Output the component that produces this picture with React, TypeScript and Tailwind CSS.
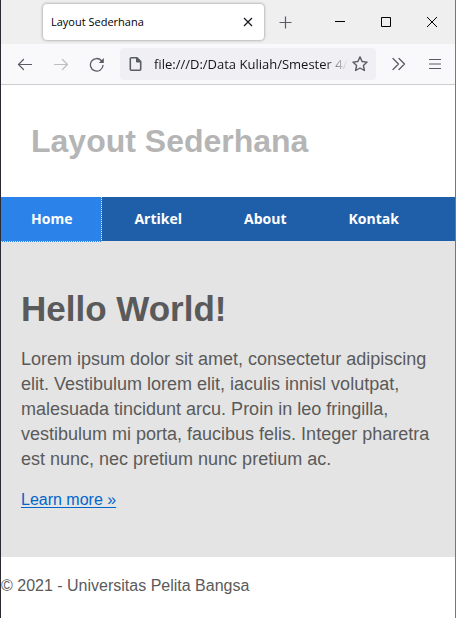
import React from "react";

const navItems = ["Home", "Artikel", "About", "Kontak"];

function TabBar() {
  return (
    <div className="flex h-11 items-center bg-[#efeff0] text-[#15141a]">
      <div className="ml-[42px] flex h-9 min-w-0 flex-1 items-center justify-between rounded bg-white pl-2 pr-2 shadow-[0_0_3px_rgba(0,0,0,0.45)]">
        <span className="truncate pt-px font-['Open_Sans',sans-serif] text-[11px] text-black">Layout Sederhana</span>
        <button aria-label="Close tab" className="flex size-4 items-center justify-center">
          <svg width="16" height="16" viewBox="0 0 16 16" fill="none" stroke="currentColor" strokeWidth="1.2">
            <path d="M4 4l8 8M12 4l-8 8" />
          </svg>
        </button>
      </div>
      <button aria-label="New tab" className="mr-[9px] flex w-11 justify-center text-[#5b5b66]">
        <svg width="16" height="16" viewBox="0 0 16 16" fill="none" stroke="currentColor" strokeWidth="1.2">
          <path d="M7.500 2.500v12M1.500 8.500h12" />
        </svg>
      </button>
      <div className="flex text-black">
        <button aria-label="Minimize" className="flex w-[46px] justify-center">
          <svg width="12" height="12" viewBox="0 0 12 12" fill="none" stroke="currentColor">
            <path d="M1 5.500h10" />
          </svg>
        </button>
        <button aria-label="Maximize" className="flex w-[46px] justify-center">
          <svg width="12" height="12" viewBox="0 0 12 12" fill="none" stroke="currentColor">
            <path d="M1.500 1.500h9v9h-9z" />
          </svg>
        </button>
        <button aria-label="Close window" className="flex w-[46px] justify-center">
          <svg width="12" height="12" viewBox="0 0 12 12" fill="none" stroke="currentColor">
            <path d="M1 1l10 10M11 1L1 11" />
          </svg>
        </button>
      </div>
    </div>
  );
}

function Toolbar() {
  return (
    <div className="flex h-[41px] items-center border-b border-[#cccccf] bg-[#f9f9fb] pl-[15px] pr-3 text-[#5b5b66]">
      <button aria-label="Back" className="w-9">
        <svg width="16" height="16" viewBox="0 0 16 16" fill="none" stroke="currentColor" strokeWidth="1.2" strokeLinecap="round" strokeLinejoin="round">
          <path d="M15.500 8.500H2.500M7.500 3.500L2.500 8.500L7.500 13.500" />
        </svg>
      </button>
      <button aria-label="Forward" disabled className="w-9 text-[#bdbdc2]">
        <svg width="16" height="16" viewBox="0 0 16 16" fill="none" stroke="currentColor" strokeWidth="1.2" strokeLinecap="round" strokeLinejoin="round">
          <path d="M2.500 8.500h13M10.500 3.500L15.500 8.500L10.500 13.500" />
        </svg>
      </button>
      <button aria-label="Reload" className="w-8">
        <svg width="16" height="16" viewBox="0 0 16 16" fill="none" stroke="currentColor" strokeWidth="1.3" strokeLinecap="round">
          <path d="M15 9.500A6.300 6.300 0 1 1 13.500 4.700" />
          <path d="M15.800 2v5h-5z" fill="currentColor" stroke="none" />
        </svg>
      </button>
      <div className="flex h-8 min-w-0 flex-1 items-center rounded bg-[#f0f0f4] pl-2 pr-2">
        <svg className="shrink-0" width="16" height="16" viewBox="0 0 16 16" fill="none" stroke="currentColor" strokeWidth="1.6" strokeLinejoin="round">
          <path d="M3.300 1.800h5.700l3.700 3.700v7.700a1 1 0 0 1-1 1H3.300a1 1 0 0 1-1-1V2.800a1 1 0 0 1 1-1z" />
          <path d="M8.500 2v4h4z" fill="currentColor" strokeWidth="1" />
        </svg>
        <input
          aria-label="Address"
          readOnly
          value="file:///D:/Data Kuliah/Smester 4/"
          className="ml-[10px] mr-1 min-w-0 flex-1 bg-transparent pt-0.5 font-['Open_Sans',sans-serif] text-[13px] text-[#15141a] outline-none [mask-image:linear-gradient(to_left,transparent,black_24px)]"
        />
        <button aria-label="Bookmark" className="shrink-0">
          <svg width="16" height="16" viewBox="0 0 16 16" fill="none" stroke="currentColor" strokeWidth="1.4" strokeLinejoin="round">
            <path d="M8 .9l2.100 4.600 5 .6-3.700 3.400 1 5L8 12l-4.400 2.500 1-5L.9 6.100l5-.6z" />
          </svg>
        </button>
      </div>
      <button aria-label="More tools" className="ml-[14px]">
        <svg width="16" height="16" viewBox="0 0 16 16" fill="none" stroke="currentColor" strokeWidth="1.3" strokeLinecap="round" strokeLinejoin="round">
          <path d="M3 2.500L8.500 8l-5.500 5.500M9 2.500L14.500 8l-5.500 5.500" />
        </svg>
      </button>
      <button aria-label="Menu" className="ml-[21px]">
        <svg width="16" height="16" viewBox="0 0 16 16" fill="none" stroke="currentColor" strokeWidth="1.2">
          <path d="M2 3.500h12M2 8h12M2 12.500h12" />
        </svg>
      </button>
    </div>
  );
}

export default function App() {
  return (
    <div className="min-h-screen border-l border-r border-l-[#2b2a33] border-r-[#77777a] bg-white font-['Liberation_Sans',Arial,sans-serif] text-[#5a5a5a]">
      <TabBar />
      <Toolbar />
      <header className="flex h-28 items-center px-[30px]">
        <h1 className="text-[32px] font-bold leading-10 text-[#b5b5b5]">Layout Sederhana</h1>
      </header>
      <nav className="flex h-11 gap-0.5 bg-[#1f5faa] font-['Open_Sans',sans-serif] text-sm font-bold text-white">
        {navItems.map((item, i) => (
          <a
            key={item}
            href="#"
            className={
              i === 0
                ? "relative -mb-px flex items-center border-b border-r border-dotted border-[#d5e5fa] bg-[#2b83ea] pl-[30px] pr-[29px]"
                : "flex items-center px-[30px]"
            }
          >
            {item}
          </a>
        ))}
      </nav>
      <main className="bg-[#e4e4e4] px-5 pb-[45px] pt-12">
        <h2 className="text-[35px] font-bold leading-10">Hello World!</h2>
        <p className="mt-[18px] text-lg leading-[25px]">
          Lorem ipsum dolor sit amet, consectetur adipiscing elit. Vestibulum lorem elit, iaculis innisl volutpat,
          malesuada tincidunt arcu. Proin in leo fringilla, vestibulum mi porta, faucibus felis. Integer pharetra est
          nunc, nec pretium nunc pretium ac.
        </p>
        <p className="mt-4 text-base leading-6">
          <a href="#" className="text-[#0066cc] underline underline-offset-2">
            Learn more »
          </a>
        </p>
      </main>
      <footer className="pt-[17px] text-base leading-6">© 2021 - Universitas Pelita Bangsa</footer>
    </div>
  );
}
